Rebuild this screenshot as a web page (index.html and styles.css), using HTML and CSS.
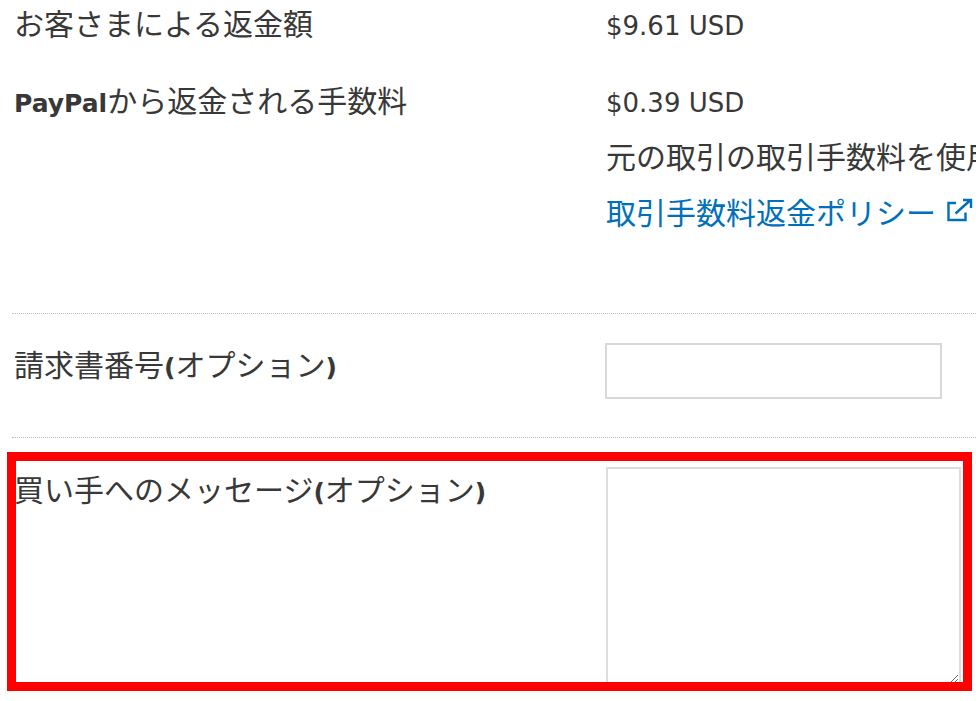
FILE: index.html
```html
<!DOCTYPE html>
<html lang="ja">
<head>
<meta charset="utf-8">
<title>返金</title>
<link rel="stylesheet" href="styles.css">
</head>
<body>
<div class="page">
  <div class="row row-first">
    <div class="label">お客さまによる返金額</div>
    <div class="value"><div class="line-first"><span class="lat">$9.61 USD</span></div></div>
  </div>
  <div class="row row-fee">
    <div class="label"><b class="lat">PayPal</b>から返金される手数料</div>
    <div class="value">
      <div class="line"><span class="lat">$0.39 USD</span></div>
      <div class="line">元の取引の取引手数料を使用します。</div>
      <div class="line"><a class="link" href="#">取引手数料返金ポリシー<svg class="ext" viewBox="0 0 28 26" width="28" height="26" aria-hidden="true"><path d="M10 5H2.5v17h17v-7.5" fill="none" stroke="currentColor" stroke-width="2.4"/><path d="M9.5 15.5L24 2.5M17 2h8v8" fill="none" stroke="currentColor" stroke-width="2.4"/></svg></a></div>
    </div>
  </div>
  <div class="row row-invoice">
    <div class="label label-mid">請求書番号<b class="lat">(</b>オプション<b class="lat">)</b></div>
    <div class="value"><input class="field" type="text" aria-label="請求書番号"></div>
  </div>
  <div class="row row-message">
    <div class="label">買い手へのメッセージ<b class="lat">(</b>オプション<b class="lat">)</b></div>
    <div class="value"><textarea class="area" aria-label="買い手へのメッセージ"></textarea></div>
  </div>
</div>
<div class="highlight"></div>
</body>
</html>
```
FILE: styles.css
```css
html, body {
  margin: 0;
  padding: 0;
  background: #ffffff;
}
body {
  width: 976px;
  height: 701px;
  overflow: hidden;
  position: relative;
  font-family: "Noto Sans CJK JP", "Noto Sans", sans-serif;
  font-size: 30px;
  color: #383838;
}
.page {
  padding-left: 12px;
}
.lat {
  font-family: "DejaVu Sans", sans-serif;
  font-size: 26px;
}
b.lat {
  font-weight: bold;
  font-size: 25px;
}
.row {
  display: grid;
  grid-template-columns: 594px 1fr;
}
.label {
  padding-left: 2px;
  white-space: nowrap;
}
.value {
  white-space: nowrap;
}
.row-first {
  line-height: 44px;
}
.line-first {
  height: 44px;
}
.row-fee {
  margin-top: 27px;
  line-height: 56px;
  padding-bottom: 74px;
  border-bottom: 1px dotted #bdbdbd;
}
.line {
  height: 56px;
}
.link {
  color: #0070ba;
  text-decoration: none;
  display: inline-flex;
  align-items: center;
  gap: 10px;
}
.ext {
  display: block;
}
.row-invoice {
  align-items: start;
  padding-top: 29px;
  padding-bottom: 38px;
  border-bottom: 1px dotted #bdbdbd;
}
.label-mid {
  line-height: 40px;
}
.field {
  display: block;
  width: 337px;
  height: 56px;
  box-sizing: border-box;
  border: 2px solid #d8d8d8;
  margin: 0 0 0 -1px;
  padding: 0 10px;
  font: inherit;
  background: #fff;
}
.row-message {
  padding-top: 29px;
  line-height: 42px;
}
.area {
  display: block;
  width: 355px;
  height: 218px;
  box-sizing: border-box;
  border: 2px solid #dddddd;
  margin: 0;
  padding: 8px;
  font: inherit;
  background: #fff;
}
.highlight {
  position: absolute;
  left: 7px;
  top: 452px;
  width: 965px;
  height: 239px;
  box-sizing: border-box;
  border: 9px solid #ff0000;
  pointer-events: none;
}
```
